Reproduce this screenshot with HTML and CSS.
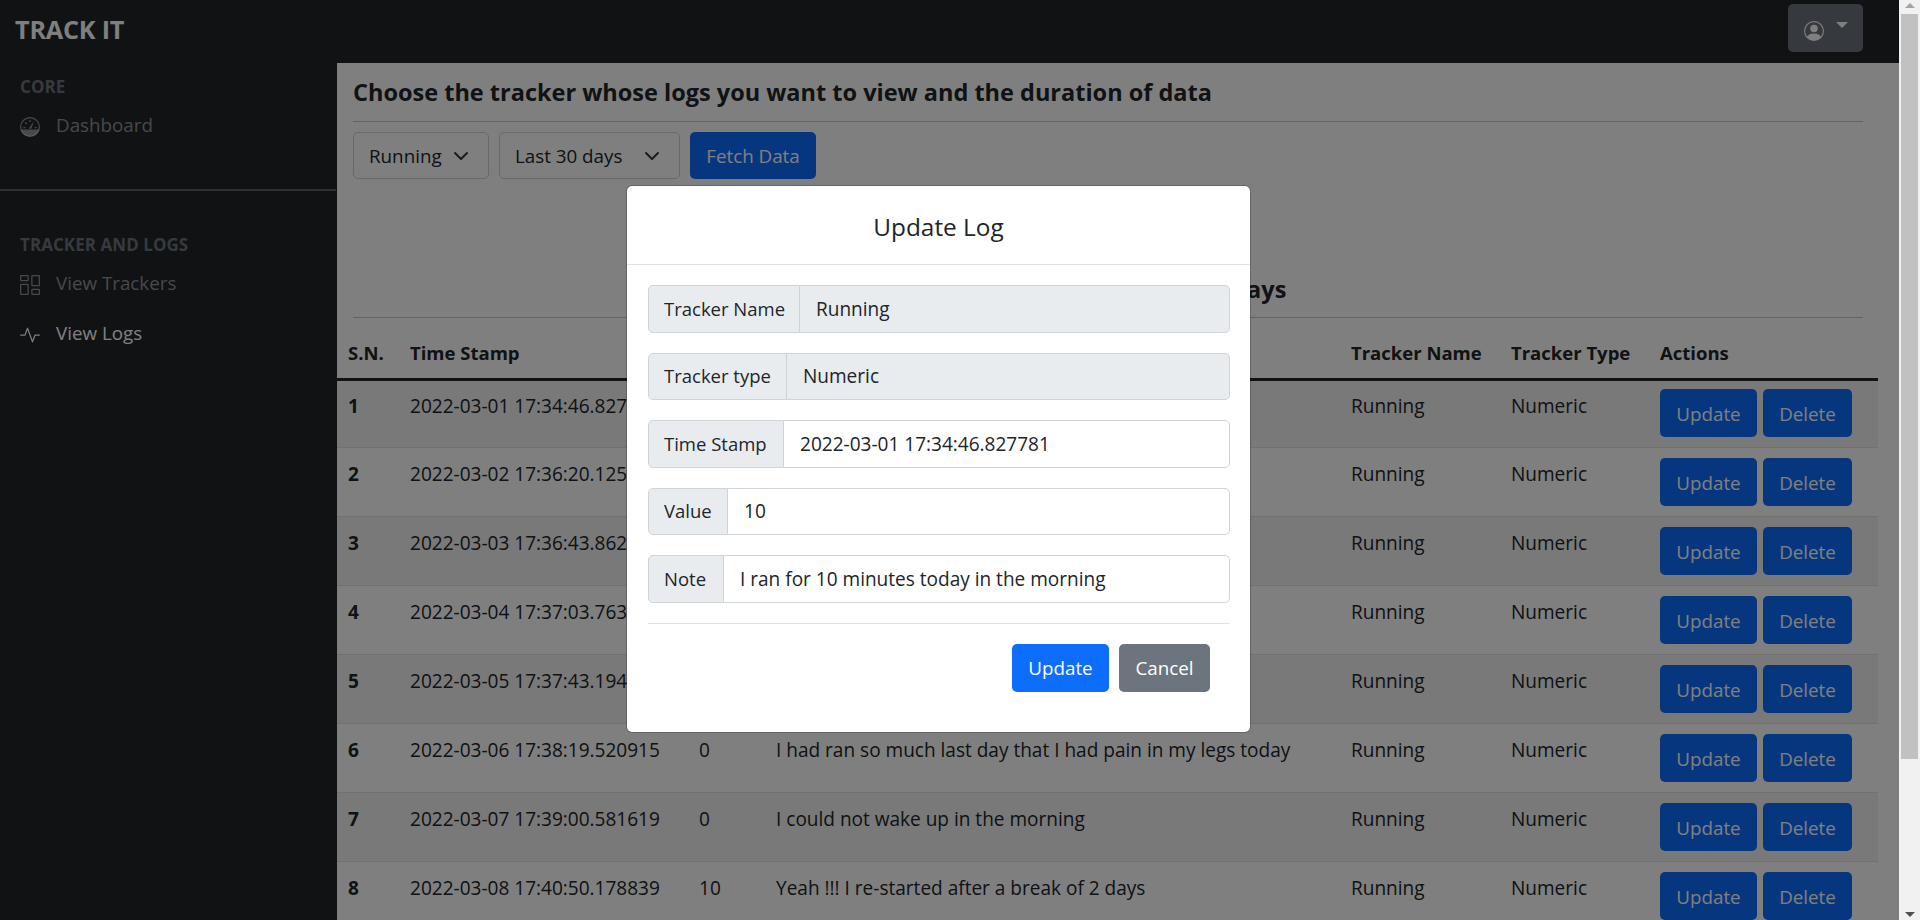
FILE: index.html
```html
<!DOCTYPE html>
<html lang="en">
  <head>
    <meta charset="UTF-8" />
    <title>Track It</title>
    <link rel="stylesheet" href="styles.css">
  </head>
  <body>
    <div class="page">
      <nav class="navbar">
        <span class="brand">TRACK IT</span>
        <button class="user-btn">
          <svg class="user-icon" viewBox="0 0 16 16" fill="currentColor">
            <path d="M11 6a3 3 0 1 1-6 0 3 3 0 0 1 6 0z"/>
            <path fill-rule="evenodd" d="M0 8a8 8 0 1 1 16 0A8 8 0 0 1 0 8zm8-7a7 7 0 0 0-5.468 11.37C3.242 11.226 4.805 10 8 10s4.757 1.225 5.468 2.37A7 7 0 0 0 8 1z"/>
          </svg>
          <span class="caret"></span>
        </button>
      </nav>

      <div class="layout">
        <aside class="sidebar">
          <div class="side-heading">CORE</div>
          <a class="side-link">
            <svg class="side-icon" viewBox="0 0 16 16" fill="currentColor">
              <circle cx="8" cy="8" r="7.5" fill="none" stroke="currentColor" stroke-width="1"/>
              <path d="M.8 10h14.4A7.5 7.5 0 0 1 8 15.5 7.5 7.5 0 0 1 .8 10z"/>
              <path d="M8 2.3v1.7M2.6 8.4h1.7M11.7 8.4h1.7M4.2 4.4l1.2 1.2" fill="none" stroke="currentColor" stroke-width="1"/>
              <path d="M7 8.9 11.2 3.6 8.9 9.6z"/>
            </svg>
            Dashboard
          </a>
          <div class="side-divider"></div>
          <div class="side-heading">TRACKER AND LOGS</div>
          <a class="side-link">
            <svg class="side-icon" viewBox="0 0 16 16" fill="currentColor">
              <path d="M6 1v3H1V1h5zM1 0a1 1 0 0 0-1 1v3a1 1 0 0 0 1 1h5a1 1 0 0 0 1-1V1a1 1 0 0 0-1-1H1zm14 12v3h-5v-3h5zm-5-1a1 1 0 0 0-1 1v3a1 1 0 0 0 1 1h5a1 1 0 0 0 1-1v-3a1 1 0 0 0-1-1h-5zM6 8v7H1V8h5zM1 7a1 1 0 0 0-1 1v7a1 1 0 0 0 1 1h5a1 1 0 0 0 1-1V8a1 1 0 0 0-1-1H1zm14-6v7h-5V1h5zm-5-1a1 1 0 0 0-1 1v7a1 1 0 0 0 1 1h5a1 1 0 0 0 1-1V1a1 1 0 0 0-1-1h-5z"/>
            </svg>
            View Trackers
          </a>
          <a class="side-link side-link-active">
            <svg class="side-icon" viewBox="0 0 16 16" fill="currentColor">
              <path fill-rule="evenodd" d="M6 2a.5.5 0 0 1 .47.33L10 12.036l1.53-4.208A.5.5 0 0 1 12 7.5h3.5a.5.5 0 0 1 0 1h-3.15l-1.88 5.17a.5.5 0 0 1-.94 0L6 3.964 4.47 8.171A.5.5 0 0 1 4 8.5H.5a.5.5 0 0 1 0-1h3.15l1.88-5.17A.5.5 0 0 1 6 2Z"/>
            </svg>
            View Logs
          </a>
        </aside>

        <main class="main">
          <div class="section">
            <h4 class="title">Choose the tracker whose logs you want to view and the duration of data</h4>
            <hr class="rule rule-top" />
            <div class="filters">
              <div class="select select-tracker">Running
                <svg class="chevron" viewBox="0 0 16 16"><path d="M2 5l6 6 6-6" fill="none" stroke="currentColor" stroke-width="2" stroke-linecap="round" stroke-linejoin="round"/></svg>
              </div>
              <div class="select select-range">Last 30 days
                <svg class="chevron" viewBox="0 0 16 16"><path d="M2 5l6 6 6-6" fill="none" stroke="currentColor" stroke-width="2" stroke-linecap="round" stroke-linejoin="round"/></svg>
              </div>
              <button class="btn btn-primary btn-fetch">Fetch Data</button>
            </div>
            <h4 class="title table-title">Logs for Running: Last 30 days</h4>
            <hr class="rule" />
          </div>

          <table class="logs">
            <thead>
              <tr>
                <th>S.N.</th>
                <th>Time Stamp</th>
                <th>Value</th>
                <th>Note</th>
                <th>Tracker Name</th>
                <th>Tracker Type</th>
                <th>Actions</th>
              </tr>
            </thead>
            <tbody>
              <tr>
                <th>1</th><td>2022-03-01 17:34:46.827781</td><td>10</td><td>I ran for 10 minutes today in the morning</td><td>Running</td><td>Numeric</td>
                <td class="actions"><button class="btn btn-primary btn-update">Update</button><button class="btn btn-primary btn-delete">Delete</button></td>
              </tr>
              <tr>
                <th>2</th><td>2022-03-02 17:36:20.125304</td><td>15</td><td>Ran a little longer today</td><td>Running</td><td>Numeric</td>
                <td class="actions"><button class="btn btn-primary btn-update">Update</button><button class="btn btn-primary btn-delete">Delete</button></td>
              </tr>
              <tr>
                <th>3</th><td>2022-03-03 17:36:43.862417</td><td>20</td><td>Felt good after the run</td><td>Running</td><td>Numeric</td>
                <td class="actions"><button class="btn btn-primary btn-update">Update</button><button class="btn btn-primary btn-delete">Delete</button></td>
              </tr>
              <tr>
                <th>4</th><td>2022-03-04 17:37:03.763290</td><td>25</td><td>Longest run so far</td><td>Running</td><td>Numeric</td>
                <td class="actions"><button class="btn btn-primary btn-update">Update</button><button class="btn btn-primary btn-delete">Delete</button></td>
              </tr>
              <tr>
                <th>5</th><td>2022-03-05 17:37:43.194562</td><td>30</td><td>Ran in the evening as well</td><td>Running</td><td>Numeric</td>
                <td class="actions"><button class="btn btn-primary btn-update">Update</button><button class="btn btn-primary btn-delete">Delete</button></td>
              </tr>
              <tr>
                <th>6</th><td>2022-03-06 17:38:19.520915</td><td>0</td><td>I had ran so much last day that I had pain in my legs today</td><td>Running</td><td>Numeric</td>
                <td class="actions"><button class="btn btn-primary btn-update">Update</button><button class="btn btn-primary btn-delete">Delete</button></td>
              </tr>
              <tr>
                <th>7</th><td>2022-03-07 17:39:00.581619</td><td>0</td><td>I could not wake up in the morning</td><td>Running</td><td>Numeric</td>
                <td class="actions"><button class="btn btn-primary btn-update">Update</button><button class="btn btn-primary btn-delete">Delete</button></td>
              </tr>
              <tr>
                <th>8</th><td>2022-03-08 17:40:50.178839</td><td>10</td><td>Yeah !!! I re-started after a break of 2 days</td><td>Running</td><td>Numeric</td>
                <td class="actions"><button class="btn btn-primary btn-update">Update</button><button class="btn btn-primary btn-delete">Delete</button></td>
              </tr>
            </tbody>
          </table>
        </main>
      </div>

      <div class="backdrop"></div>

      <div class="modal">
        <div class="modal-header">Update Log</div>
        <div class="modal-body">
          <div class="input-group">
            <span class="input-label label-name">Tracker Name</span>
            <span class="input-value input-disabled">Running</span>
          </div>
          <div class="input-group">
            <span class="input-label label-type">Tracker type</span>
            <span class="input-value input-disabled">Numeric</span>
          </div>
          <div class="input-group">
            <span class="input-label label-time">Time Stamp</span>
            <span class="input-value">2022-03-01 17:34:46.827781</span>
          </div>
          <div class="input-group">
            <span class="input-label label-value">Value</span>
            <span class="input-value">10</span>
          </div>
          <div class="input-group">
            <span class="input-label label-note">Note</span>
            <span class="input-value">I ran for 10 minutes today in the morning</span>
          </div>
          <hr class="modal-rule" />
          <div class="modal-actions">
            <button class="btn btn-primary btn-update">Update</button>
            <button class="btn btn-secondary btn-cancel">Cancel</button>
          </div>
        </div>
      </div>
    </div>

    <div class="scrollbar">
      <span class="arrow arrow-up"></span>
      <div class="thumb"></div>
      <span class="arrow arrow-down"></span>
    </div>
  </body>
</html>
```

FILE: styles.css
```css
* {
  box-sizing: border-box;
}

html,
body {
  margin: 0;
  height: 920px;
  overflow: hidden;
}

body {
  display: flex;
  font-family: "Open Sans", "Liberation Sans", sans-serif;
  font-size: 18.8px;
  line-height: 30px;
  color: #212529;
  background: #fff;
}

.page {
  position: relative;
  flex: 1;
  height: 920px;
  overflow: hidden;
}

/* top bar */
.navbar {
  display: flex;
  align-items: center;
  justify-content: space-between;
  height: 63px;
  padding: 0 36px 0 15px;
  background: #212529;
}

.brand {
  font-size: 25.2px;
  font-weight: 700;
  color: #fff;
  letter-spacing: -0.2px;
  margin-bottom: 5px;
}

.user-btn {
  display: flex;
  align-items: center;
  width: 75px;
  height: 48px;
  margin-bottom: 7px;
  padding: 0 0 0 16px;
  border: 0;
  border-radius: 5px;
  background: #6c757d;
  color: #fff;
}

.user-icon {
  width: 20px;
  height: 20px;
  margin-top: 5px;
}

.caret {
  width: 0;
  height: 0;
  margin-left: 12px;
  margin-bottom: 6px;
  border-top: 6px solid #fff;
  border-left: 6px solid transparent;
  border-right: 6px solid transparent;
}

.layout {
  display: flex;
  height: 857px;
}

/* sidebar */
.sidebar {
  flex: 0 0 337px;
  padding-top: 9px;
  background: #212529;
}

.side-heading {
  padding-left: 20px;
  height: 28px;
  font-size: 17px;
  font-weight: 700;
  letter-spacing: 0.05px;
  color: #6c757d;
}

.side-link {
  display: flex;
  align-items: center;
  height: 50px;
  padding-left: 20px;
  color: rgba(255, 255, 255, 0.5);
}

.side-link-active {
  color: #fff;
}

.side-icon {
  width: 20px;
  height: 20px;
  margin-top: 4px;
  margin-right: 16px;
}

.side-divider {
  height: 2px;
  margin: 39px 1px 39px 0;
  background: #5c6064;
}

/* main area */
.main {
  flex: 1;
  min-width: 0;
  background: #fff;
}

.section {
  padding: 0 36px 0 16px;
}

.title {
  margin: 0;
  padding-top: 14px;
  height: 45px;
  font-size: 23.5px;
  font-weight: 700;
}

.table-title {
  margin-top: 92px;
  padding-top: 0;
  height: 36px;
  line-height: 36px;
  letter-spacing: 0.16px;
  text-align: center;
}

.rule {
  height: 1px;
  margin: 10px 0 0;
  border: 0;
  background: #c8c9ca;
}

.rule-top {
  margin: 13px 0 10px;
}

.filters {
  display: flex;
  gap: 10px;
  height: 47px;
}

.select {
  display: flex;
  align-items: center;
  justify-content: space-between;
  height: 47px;
  padding: 0 19px 0 15px;
  border: 1px solid #ced4da;
  border-radius: 5px;
  background: #fff;
}

.select-tracker {
  width: 136px;
}

.select-range {
  width: 181px;
}

.chevron {
  width: 16px;
  height: 16px;
  color: #343a40;
}

.btn {
  height: 48px;
  padding: 0;
  border: 0;
  border-radius: 5px;
  font-family: inherit;
  font-size: 18.8px;
  color: #fff;
}

.btn-primary {
  background: #0d6efd;
}

.btn-secondary {
  background: #6c757d;
}

.btn-fetch {
  width: 126px;
  height: 47px;
}

.btn-update {
  width: 97px;
}

.btn-delete {
  width: 89px;
}

.btn-cancel {
  width: 91px;
}

/* logs table */
.logs {
  width: 1541px;
  table-layout: fixed;
  border-collapse: separate;
  border-spacing: 0;
  font-size: 19.05px;
}

.logs th,
.logs td {
  padding: 11px 10px 0;
  text-align: left;
  vertical-align: top;
  border-bottom: 1px solid #dee2e6;
}

.logs thead th {
  padding: 20px 10px 10px;
  font-size: 18.5px;
  font-weight: 700;
  border-bottom: 3px solid #212529;
}

.logs thead th:nth-child(1) { width: 63px; padding-left: 11px; }
.logs thead th:nth-child(2) { width: 289px; }
.logs thead th:nth-child(3) { width: 77px; }
.logs thead th:nth-child(4) { width: 575px; }
.logs thead th:nth-child(5) { width: 160px; }
.logs thead th:nth-child(6) { width: 149px; }
.logs thead th:nth-child(7) { width: 228px; }

.logs tbody th {
  padding-left: 11px;
}

.logs tbody tr {
  height: 69px;
}

.logs tbody tr:nth-child(odd) {
  background: rgba(0, 0, 0, 0.05);
}

.logs tbody tr:first-child {
  height: 67px;
}

.logs tbody tr:first-child th,
.logs tbody tr:first-child td {
  padding-top: 10px;
}

.logs .actions {
  padding-top: 10px;
  padding-bottom: 10px;
  white-space: nowrap;
}

.logs tbody tr:first-child .actions {
  padding-top: 8px;
}

.actions .btn {
  padding-top: 2px;
}

.actions .btn-update {
  margin-right: 6px;
}

/* modal on top of everything */
.backdrop {
  position: absolute;
  inset: 0;
  background: rgba(0, 0, 0, 0.5);
}

.modal {
  position: absolute;
  top: 185px;
  left: 626px;
  width: 625px;
  height: 548px;
  border: 1px solid rgba(0, 0, 0, 0.2);
  border-radius: 6px;
  background: #fff;
  background-clip: padding-box;
}

.modal-header {
  height: 79px;
  padding-top: 22px;
  border-bottom: 1px solid #dee2e6;
  font-size: 24.4px;
  font-weight: 500;
  line-height: 38px;
  text-align: center;
}

.modal-body {
  padding: 20px 20px 0 21px;
}

.input-group {
  display: flex;
  height: 47.5px;
  margin-bottom: 20px;
  font-size: 19.05px;
}

.input-label {
  display: flex;
  align-items: center;
  padding-left: 15px;
  border: 1px solid #ced4da;
  border-radius: 5px 0 0 5px;
  background: #e9ecef;
  font-size: 18.5px;
  white-space: nowrap;
}

.label-name { flex: 0 0 152px; }
.label-type { flex: 0 0 139px; }
.label-time { flex: 0 0 136px; }
.label-value { flex: 0 0 80px; }
.label-note { flex: 0 0 76px; }

.input-value {
  flex: 1;
  display: flex;
  align-items: center;
  margin-left: -1px;
  padding-left: 16px;
  border: 1px solid #ced4da;
  border-radius: 0 5px 5px 0;
  background: #fff;
}

.input-disabled {
  background: #e9ecef;
}

.modal-rule {
  height: 1px;
  margin: 0;
  border: 0;
  background: #dee2e6;
}

.modal-actions {
  display: flex;
  justify-content: flex-end;
  gap: 10px;
  margin-top: 20px;
  padding-right: 20px;
}

/* fake window scrollbar, the shot has one */
.scrollbar {
  display: flex;
  flex-direction: column;
  align-items: center;
  flex: 0 0 21px;
  height: 920px;
  background: #f1f1f1;
}

.arrow {
  width: 0;
  height: 0;
  border-left: 5px solid transparent;
  border-right: 5px solid transparent;
}

.arrow-up {
  margin-top: 3px;
  border-bottom: 5px solid #a3a3a3;
}

.thumb {
  width: 17px;
  height: 745px;
  margin-top: 6px;
  background: #c1c1c1;
}

.arrow-down {
  margin-top: auto;
  margin-bottom: 3px;
  border-top: 5px solid #505050;
}
```
